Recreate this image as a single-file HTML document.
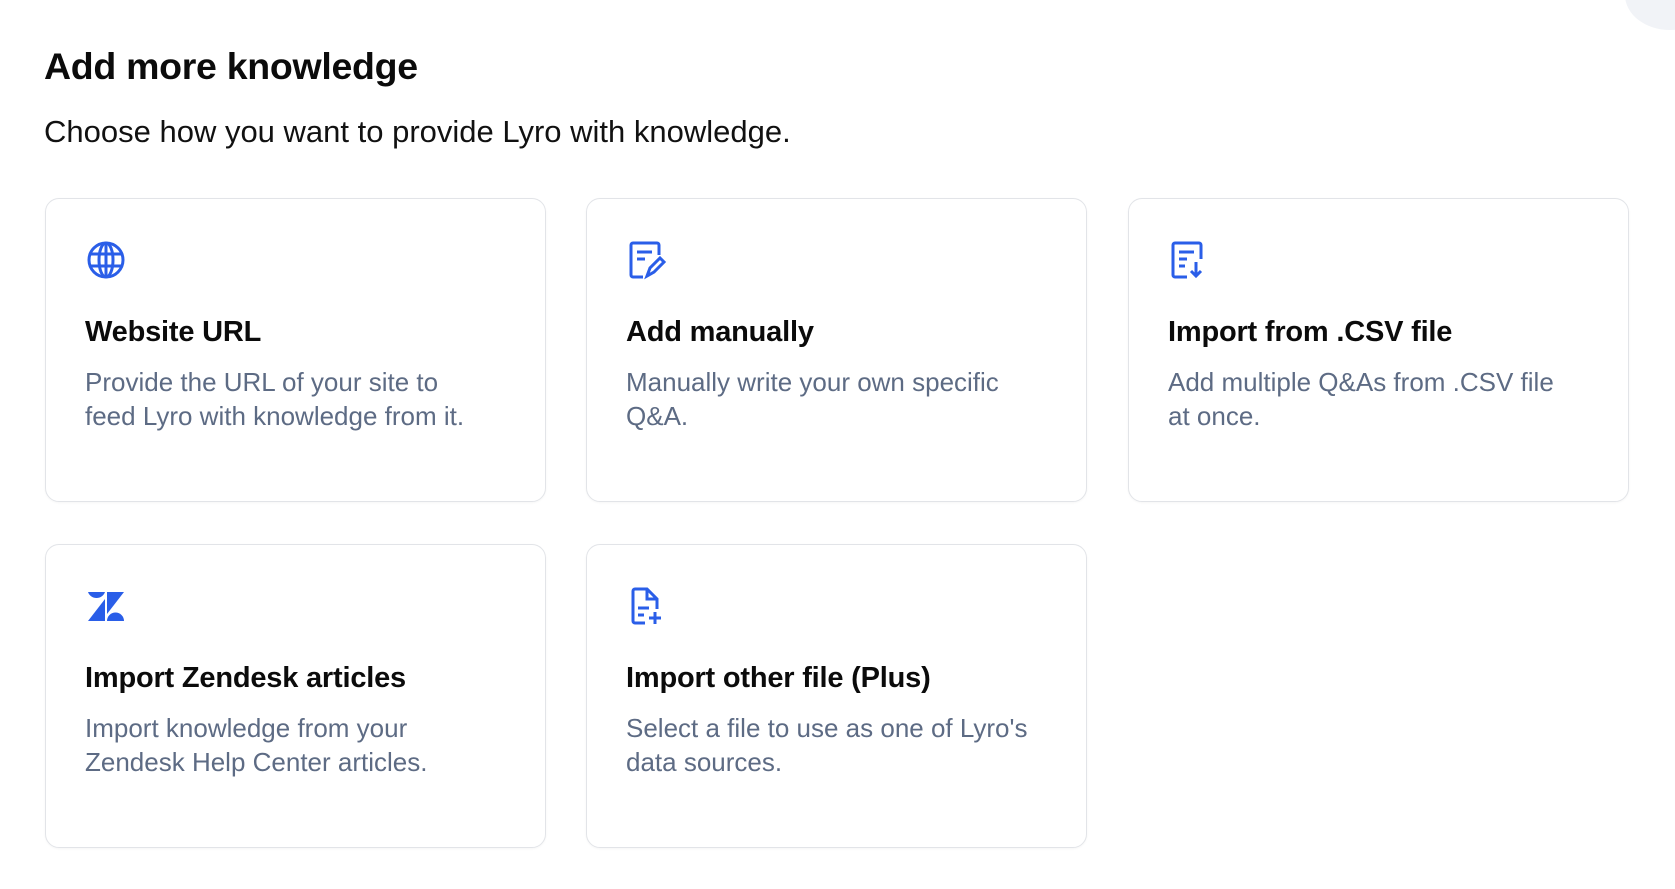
<!DOCTYPE html>
<html><head><meta charset="utf-8"><style>
body{margin:0;width:1675px;height:889px;background:#fff;font-family:"Liberation Sans",sans-serif;position:relative;overflow:hidden;color:#0b0b0b}
h1{position:absolute;left:44px;top:45px;margin:0;font-size:37.5px;font-weight:bold;letter-spacing:-0.3px}
.sub{position:absolute;left:44px;top:114px;font-size:31px;color:#111}
.card{position:absolute;width:501px;height:304px;border:1.5px solid #e2e4e8;border-radius:14px;box-sizing:border-box;box-shadow:0 1px 2px rgba(0,0,0,.04)}
.card svg{position:absolute;left:40px;top:41px}
.card .t{position:absolute;left:39px;top:117px;font-size:29px;font-weight:bold;letter-spacing:-0.2px}
.card .d{position:absolute;left:39px;top:166px;width:450px;font-size:26px;line-height:34px;color:#5d6b84;white-space:nowrap}
.blob{position:absolute;right:-40px;top:-40px;width:90px;height:70px;border-radius:50%;background:#f1f3f7}
</style></head><body>
<div class="blob"></div>
<h1>Add more knowledge</h1>
<div class="sub">Choose how you want to provide Lyro with knowledge.</div>

<div class="card" style="left:45px;top:198px">
<svg width="40" height="40" viewBox="0 0 40 40" fill="none" stroke="#2a5ee8" stroke-width="3"><circle cx="20" cy="20" r="17"/><ellipse cx="20" cy="20" rx="7" ry="17"/><line x1="3" y1="14" x2="37" y2="14"/><line x1="3" y1="26" x2="37" y2="26"/><line x1="20" y1="3" x2="20" y2="37"/></svg>
<div class="t">Website URL</div>
<div class="d">Provide the URL of your site to<br>feed Lyro with knowledge from it.</div></div>

<div class="card" style="left:586px;top:198px">
<svg width="40" height="40" viewBox="0 0 40 40" fill="none" stroke="#2a5ee8" stroke-width="3"><path d="M16 37H6a2 2 0 0 1-2-2V5a2 2 0 0 1 2-2h24a2 2 0 0 1 2 2v10"/><line x1="10" y1="12" x2="25" y2="12"/><line x1="10" y1="19" x2="18" y2="19"/><path d="M20 36l3-8 10-10 4 4-10 10z"/></svg>
<div class="t">Add manually</div>
<div class="d">Manually write your own specific<br>Q&amp;A.</div></div>

<div class="card" style="left:1128px;top:198px">
<svg width="40" height="40" viewBox="0 0 40 40" fill="none" stroke="#2a5ee8" stroke-width="3"><path d="M18 37H6a2 2 0 0 1-2-2V5a2 2 0 0 1 2-2h24a2 2 0 0 1 2 2v14"/><line x1="10" y1="12" x2="25" y2="12"/><line x1="10" y1="19" x2="18" y2="19"/><line x1="10" y1="26" x2="16" y2="26"/><path d="M27 22v14M22 31l5 5 5-5"/></svg>
<div class="t">Import from .CSV file</div>
<div class="d">Add multiple Q&amp;As from .CSV file<br>at once.</div></div>

<div class="card" style="left:45px;top:544px">
<svg width="40" height="40" viewBox="0 0 40 40" fill="#2a5ee8"><path d="M2 6A9 9 0 0 0 19 6Z"/><path d="M19 13V35H2Z"/><path d="M21 6H38L21 28Z"/><path d="M21 35A8.5 8.5 0 0 1 38 35Z"/></svg>
<div class="t">Import Zendesk articles</div>
<div class="d">Import knowledge from your<br>Zendesk Help Center articles.</div></div>

<div class="card" style="left:586px;top:544px">
<svg width="40" height="40" viewBox="0 0 40 40" fill="none" stroke="#2a5ee8" stroke-width="3"><path d="M18 37H8a2 2 0 0 1-2-2V5a2 2 0 0 1 2-2h12l10 10v10"/><path d="M20 3v10h10"/><line x1="11" y1="22" x2="22" y2="22"/><line x1="11" y1="29" x2="17" y2="29"/><path d="M28 26v12M22 32h12"/></svg>
<div class="t">Import other file (Plus)</div>
<div class="d">Select a file to use as one of Lyro's<br>data sources.</div></div>
</body></html>
